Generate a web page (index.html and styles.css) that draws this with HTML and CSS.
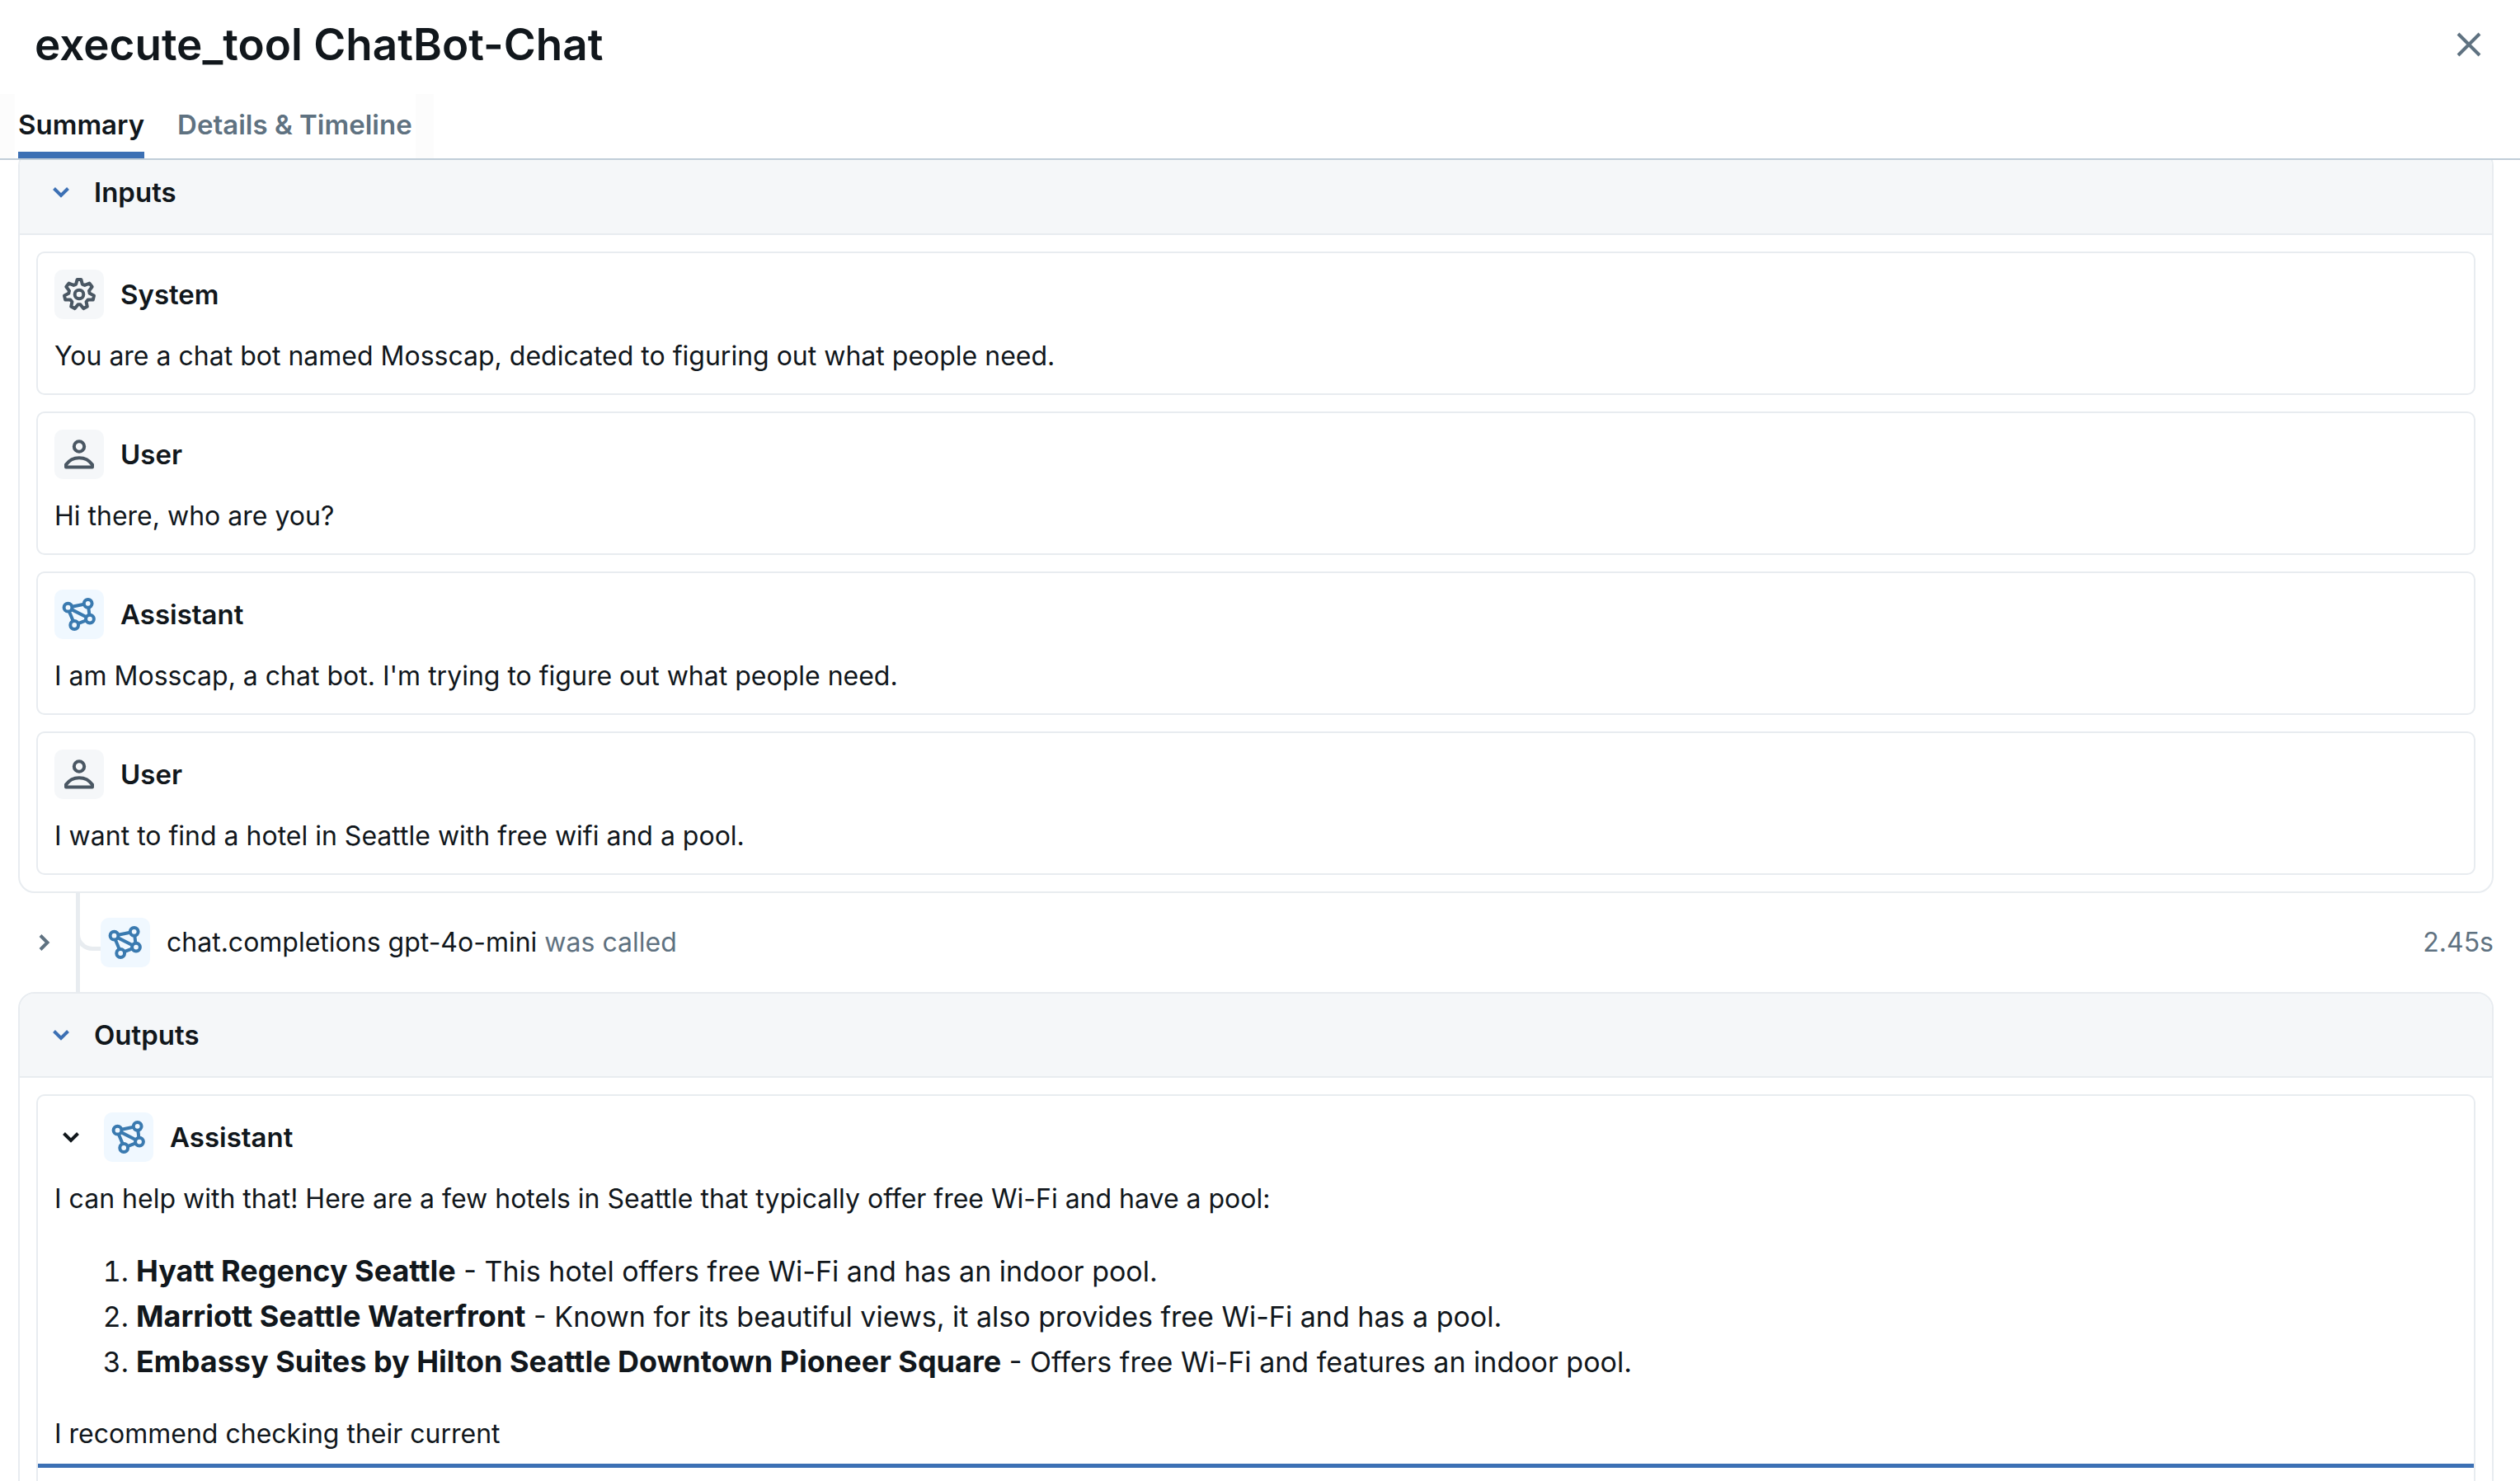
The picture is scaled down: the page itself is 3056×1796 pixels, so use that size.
FILE: index.html
```html
<!DOCTYPE html>
<html lang="en">
<head>
<meta charset="utf-8">
<title>execute_tool ChatBot-Chat</title>
<link rel="stylesheet" href="styles.css">
</head>
<body>
<svg class="sprite" aria-hidden="true">
  <symbol id="gear" viewBox="0 0 60 60">
    <path d="M27.6 12L32.4 12L33.8 17.6Q35.3 18.3 36.8 18.9L42.4 16.6L45.7 20.7L42 25.6Q42.4 27.2 42.7 28.8L48 31.6L46.8 36.6L40.6 36.6Q39.6 37.8 38.6 39L39.8 44.8L35.2 47.1L31.4 42.3Q30 42.3 28.6 42.3L24.8 47.1L20.2 44.8L21.4 39Q20.4 37.8 19.4 36.6L13.2 36.6L12 31.6L17.3 28.8Q17.6 27.2 18 25.6L14.3 20.7L17.6 16.6L23.2 18.9Q24.7 18.3 26.2 17.6Z"/>
    <circle cx="30" cy="30" r="5.3"/>
  </symbol>
  <symbol id="person" viewBox="0 0 60 60">
    <circle cx="30" cy="20.5" r="6.2"/>
    <path d="M14 45.6V42.5C17.5 37.5 23.5 34.2 30 34.2S42.5 37.5 46 42.5V45.6Z"/>
  </symbol>
  <symbol id="nodes" viewBox="0 0 60 60">
    <circle cx="16.5" cy="21.7" r="4.9"/>
    <circle cx="40.7" cy="16.8" r="4.9"/>
    <circle cx="43" cy="35.6" r="4.9"/>
    <circle cx="24.2" cy="43" r="4.9"/>
    <path d="M21.3 20.7L35.9 17.8M41.3 21.7L42.4 30.7M38.4 37.4L28.8 41.2M22.8 38.3L17.9 26.4M20.8 24.1L38.7 33.2"/>
  </symbol>
  <symbol id="down" viewBox="0 0 20 20"><path d="M1.5 5.5L10 14L18.5 5.5"/></symbol>
  <symbol id="right" viewBox="0 0 20 20"><path d="M6 1.5L14.5 10L6 18.5"/></symbol>
</svg>

<header class="header">
  <h1 class="title">execute_tool ChatBot-Chat</h1>
  <button class="close" type="button" aria-label="Close">
    <svg viewBox="0 0 30 30"><path d="M2 2L28 28M28 2L2 28"/></svg>
  </button>
</header>

<nav class="tabs" role="tablist">
  <div class="tab-list">
    <button class="tab active" type="button" role="tab" aria-selected="true">Summary</button>
    <button class="tab" type="button" role="tab" aria-selected="false">Details &amp; Timeline</button>
  </div>
</nav>

<main class="content">
  <div class="scrolled">
    <section class="panel">
      <h2 class="panel-header"><button class="toggle" type="button" aria-expanded="true"><svg class="chevron"><use href="#down"/></svg>Inputs</button></h2>
      <div class="messages">
        <article class="message">
          <h3 class="role"><svg class="icon"><use href="#gear"/></svg>System</h3>
          <p class="text">You are a chat bot named Mosscap, dedicated to figuring out what people need.</p>
        </article>
        <article class="message">
          <h3 class="role"><svg class="icon"><use href="#person"/></svg>User</h3>
          <p class="text">Hi there, who are you?</p>
        </article>
        <article class="message">
          <h3 class="role"><svg class="icon model"><use href="#nodes"/></svg>Assistant</h3>
          <p class="text">I am Mosscap, a chat bot. I'm trying to figure out what people need.</p>
        </article>
        <article class="message">
          <h3 class="role"><svg class="icon"><use href="#person"/></svg>User</h3>
          <p class="text">I want to find a hotel in Seattle with free wifi and a pool.</p>
        </article>
      </div>
    </section>

    <div class="call">
      <button class="expand" type="button" aria-label="Expand call"><svg class="chevron"><use href="#right"/></svg></button>
      <span class="branch"></span>
      <svg class="icon model"><use href="#nodes"/></svg>
      <p class="call-name">chat.completions gpt-4o-mini <span class="muted">was called</span></p>
      <span class="duration">2.45s</span>
    </div>

    <section class="panel">
      <h2 class="panel-header"><button class="toggle" type="button" aria-expanded="true"><svg class="chevron"><use href="#down"/></svg>Outputs</button></h2>
      <div class="messages">
        <article class="message output">
          <h3 class="role"><button class="collapse" type="button" aria-label="Collapse message"><svg class="chevron"><use href="#down"/></svg></button><svg class="icon model"><use href="#nodes"/></svg>Assistant</h3>
          <p class="text">I can help with that! Here are a few hotels in Seattle that typically offer free Wi-Fi and have a pool:</p>
          <ol class="hotels">
            <li><strong>Hyatt Regency Seattle</strong> - This hotel offers free Wi-Fi and has an indoor pool.</li>
            <li><strong>Marriott Seattle Waterfront</strong> - Known for its beautiful views, it also provides free Wi-Fi and has a pool.</li>
            <li><strong>Embassy Suites by Hilton Seattle Downtown Pioneer Square</strong> - Offers free Wi-Fi and features an indoor pool.</li>
          </ol>
          <p class="text">I recommend checking their current</p>
          <div class="more"></div>
        </article>
      </div>
    </section>
  </div>
</main>
</body>
</html>
```
FILE: styles.css
```css
* {
  box-sizing: border-box;
}

body {
  margin: 0;
  height: 100vh;
  display: flex;
  flex-direction: column;
  background: #fff;
  color: #11171c;
  font-family: Inter, "Liberation Sans", sans-serif;
  font-size: 32px;
  line-height: 50px;
}

h1, h2, h3, p, ol {
  margin: 0;
  font-size: inherit;
}

button {
  padding: 0;
  border: 0;
  background: none;
  color: inherit;
  font: inherit;
}

svg {
  display: block;
  flex: none;
  fill: none;
  stroke: currentColor;
}

.sprite {
  position: absolute;
  width: 0;
  height: 0;
}

.header {
  display: flex;
  align-items: center;
  justify-content: space-between;
  height: 114px;
  padding: 0 40px 6px 42px;
}

.title {
  font-size: 53px;
  font-weight: 600;
}

.close {
  width: 44px;
  height: 44px;
  padding: 7px;
  color: #5f7281;
}

.close svg {
  width: 30px;
  height: 30px;
  stroke-width: 4;
}

.tabs {
  flex: none;
  display: flex;
  height: 80px;
  border-bottom: 2px solid #c0cdd8;
}

.tab-list {
  display: flex;
  gap: 40px;
  padding: 0 4px;
  border: solid #fcfcfc;
  border-width: 0 22px 0 18px;
}

.tab {
  padding-top: 4px;
  border-bottom: 8px solid transparent;
  color: #5f7281;
  font-size: 33px;
  font-weight: 600;
}

.tab.active {
  border-color: #3c70b4;
  color: #11171c;
}

.content {
  flex: 1;
  min-height: 0;
  overflow: hidden;
}

.scrolled {
  margin: -13px 32px 0 22px;
}

.panel {
  border: 2px solid #e8ecf0;
  border-radius: 20px;
  overflow: hidden;
}

.panel-header {
  height: 102px;
  padding-left: 40px;
  border-bottom: 2px solid #e8ecf0;
  background: #f5f7f9;
}

.toggle {
  display: flex;
  align-items: center;
  gap: 30px;
  height: 100px;
  font-size: 33px;
  font-weight: 600;
}

.chevron {
  width: 20px;
  height: 20px;
  stroke-width: 4;
}

.toggle .chevron {
  color: #3c70b4;
}

.messages {
  display: grid;
  gap: 20px;
  padding: 20px;
}

.message {
  padding: 20px;
  border: 2px solid #e8ecf0;
  border-radius: 10px;
}

.role {
  display: flex;
  align-items: center;
  gap: 20px;
  margin-bottom: 20px;
  font-size: 33px;
  font-weight: 600;
}

.icon {
  width: 60px;
  height: 60px;
  border-radius: 10px;
  background: #f5f7f9;
  color: #4a5763;
  stroke-width: 4;
  stroke-linejoin: round;
}

.icon.model {
  background: #f0f8ff;
  color: #3a7ab0;
}

.call {
  display: flex;
  align-items: center;
  height: 120px;
}

.expand {
  width: 70px;
  padding-left: 21px;
  color: #5f7281;
}

.branch {
  width: 30px;
  height: 120px;
  border-left: 5px solid #e8ecf0;
}

.branch::after {
  content: "";
  display: block;
  height: 65px;
  margin-left: -5px;
  border: solid #e8ecf0;
  border-width: 0 0 5px 5px;
  border-bottom-left-radius: 20px;
}

.call-name {
  margin-left: 20px;
}

.muted,
.duration {
  color: #5f7281;
}

.duration {
  margin-left: auto;
}

.output {
  padding-bottom: 60px;
}

.collapse {
  width: 40px;
  padding-left: 10px;
}

.hotels {
  padding: 35px 0 35px 99px;
  font-size: 34px;
  line-height: 55px;
}

.hotels strong {
  font-size: 36px;
  line-height: 50px;
}

.more {
  margin: 11px -20px 0;
  border-top: 5px solid #3c70b4;
}
```
